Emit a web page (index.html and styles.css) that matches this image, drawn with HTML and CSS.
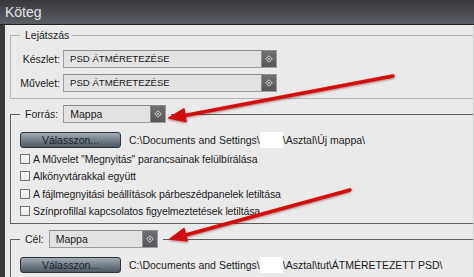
FILE: index.html
```html
<!DOCTYPE html>
<html lang="hu">

<head>
    <meta charset="UTF-8">
    <meta name="viewport" content="width=device-width, initial-scale=1.0">
    <title>Köteg</title>

    <link rel="stylesheet" href="styles.css">
</head>

<body>
    <div id="window">
        <div class="titlebar">Köteg</div>

        <div class="panel">
            <fieldset class="group group-light">
                <legend class="legend-text">Lejátszás</legend>
                <div class="field_row">
                    <span class="field_label">Készlet:</span>
                    <div class="select select-wide">
                        <span class="select_value">PSD ÁTMÉRETEZÉSE</span>
                        <span class="select_btn"><svg width="8" height="8" viewBox="0 0 8 8"><polygon points="4,0.7 7.3,4 4,7.3 0.7,4" fill="none" stroke="#d6d6d6" stroke-width="1"/><circle cx="4" cy="4" r="1" fill="#d6d6d6"/></svg></span>
                    </div>
                </div>
                <div class="field_row">
                    <span class="field_label">Művelet:</span>
                    <div class="select select-wide">
                        <span class="select_value">PSD ÁTMÉRETEZÉSE</span>
                        <span class="select_btn"><svg width="8" height="8" viewBox="0 0 8 8"><polygon points="4,0.7 7.3,4 4,7.3 0.7,4" fill="none" stroke="#d6d6d6" stroke-width="1"/><circle cx="4" cy="4" r="1" fill="#d6d6d6"/></svg></span>
                    </div>
                </div>
            </fieldset>

            <fieldset class="group">
                <legend class="legend-field">
                    <span>Forrás:</span>
                    <div class="select select-source">
                        <span class="select_value">Mappa</span>
                        <span class="select_btn"><svg width="8" height="8" viewBox="0 0 8 8"><polygon points="4,0.7 7.3,4 4,7.3 0.7,4" fill="none" stroke="#d6d6d6" stroke-width="1"/><circle cx="4" cy="4" r="1" fill="#d6d6d6"/></svg></span>
                    </div>
                </legend>
                <div class="path_row">
                    <button class="choose_btn">Válasszon...</button>
                    <span class="path">C:\Documents and Settings\<span class="blank"></span>\Asztal\Új mappa\</span>
                </div>
                <label class="check"><span class="check_box"></span>A Művelet "Megnyitás" parancsainak felülbírálása</label>
                <label class="check"><span class="check_box"></span>Alkönyvtárakkal együtt</label>
                <label class="check"><span class="check_box"></span>A fájlmegnyitási beállítások párbeszédpanelek letiltása</label>
                <label class="check"><span class="check_box"></span>Színprofillal kapcsolatos figyelmeztetések letiltása</label>
            </fieldset>

            <fieldset class="group">
                <legend class="legend-field">
                    <span>Cél:</span>
                    <div class="select select-target">
                        <span class="select_value">Mappa</span>
                        <span class="select_btn"><svg width="8" height="8" viewBox="0 0 8 8"><polygon points="4,0.7 7.3,4 4,7.3 0.7,4" fill="none" stroke="#d6d6d6" stroke-width="1"/><circle cx="4" cy="4" r="1" fill="#d6d6d6"/></svg></span>
                    </div>
                </legend>
                <div class="path_row">
                    <button class="choose_btn">Válasszon...</button>
                    <span class="path">C:\Documents and Settings\<span class="blank"></span>\Asztal\tut\ÁTMÉRETEZETT PSD\</span>
                </div>
            </fieldset>
        </div>

        <!-- red arrows drawn over the dialog -->
        <svg class="arrows" width="474" height="277" viewBox="0 0 474 277">
            <defs>
                <filter id="soft" x="-10%" y="-50%" width="120%" height="200%">
                    <feGaussianBlur stdDeviation="0.6" />
                    <feDropShadow dx="0" dy="1" stdDeviation="1" flood-color="#700" flood-opacity="0.5" />
                </filter>
            </defs>
            <g filter="url(#soft)" fill="#d20d0d" stroke="#d20d0d" stroke-linecap="round">
                <line x1="393" y1="76" x2="182" y2="116" stroke-width="3.4" />
                <polygon points="169,118 186,121.5 184,109" stroke-width="1.5" stroke-linejoin="round" />
                <line x1="350" y1="190" x2="182" y2="236" stroke-width="3.4" />
                <polygon points="170,239 187.2,240.8 184,228.6" stroke-width="1.5" stroke-linejoin="round" />
            </g>
        </svg>
    </div>
</body>

</html>
```

FILE: styles.css
```css
body {
    margin: 0;
    font-family: "Liberation Sans", Arial, sans-serif;
    font-size: 10.5px;
    color: #1b1b1b;
    overflow: hidden;
}

#window {
    position: relative;
    width: 474px;
    height: 277px;
    overflow: hidden;
    background-color: #3a3a3c;
}

.titlebar {
    height: 24px;
    line-height: 24px;
    padding-left: 5px;
    border-bottom: 1px solid #1c1c1e;

    font-size: 14px;
    color: #e4e4e6;
    background: linear-gradient(#36373b, #5c5e65);
}

.panel {
    margin-left: 5px;
    height: 252px;
    padding: 0 0 0 5px;
    border-right: 1px solid #cfcfcf;
    border-top: 1px solid #f6f6f6;

    background-color: #eaeaea;
}

.group {
    margin: 6px 0 0 0;
    padding: 9px 0 3px 9px;
    border: 1px solid #5e5e5e;
    border-right: none;
    min-width: 0;
}

.group-light {
    margin-top: 2px;
    padding-top: 8px;
    padding-bottom: 6px;
    border-color: #b4b4b4;
}

.legend-text {
    padding: 0 3px 0 5px;
    line-height: 14px;
}

.legend-field {
    display: flex;
    align-items: center;
    gap: 5px;
    padding: 0 5px;
}

.field_row {
    display: flex;
    align-items: center;
    gap: 3px;
    margin-bottom: 6px;
}

.field_row:last-child {
    margin-bottom: 0;
}

.field_label {
    width: 40px;
    text-align: right;
}

/* dropdowns */
.select {
    display: flex;
    height: 18px;
    box-sizing: border-box;
    border: 1px solid #9c9c9c;
    border-top-color: #8a8a8a;
    background-color: #e2e2e2;
}

.select-wide {
    width: 214px;
}

.select-source {
    width: 103px;
}

.select-target {
    width: 109px;
}

.select_value {
    flex: 1;
    padding-left: 6px;
    line-height: 16px;
}

.select-wide .select_value {
    font-size: 9.6px;
}

.select_btn {
    width: 14px;
    display: flex;
    align-items: center;
    justify-content: center;
    border-left: 1px solid #8c8c8c;
    background: linear-gradient(#6e7074, #55575b);
}

/* path rows */
.path_row {
    display: flex;
    align-items: center;
    gap: 8px;
    margin-bottom: 2px;
}

.choose_btn {
    width: 101px;
    height: 16px;
    padding: 0;
    border: 1px solid #2c333a;
    border-radius: 3px;

    font-family: inherit;
    font-size: 10.5px;
    color: #18212a;
    background: linear-gradient(#a2abb4, #76808a 50%, #4f5963);
}

.path {
    display: flex;
    align-items: center;
    white-space: pre;
}

.blank {
    display: inline-block;
    width: 23px;
    height: 16px;
    background-color: #ffffff;
}

/* checkboxes */
.check {
    display: flex;
    align-items: center;
    gap: 3px;
    height: 17.5px;
    letter-spacing: -0.1px;
}

.check_box {
    width: 10px;
    height: 10px;
    box-sizing: border-box;
    border: 1px solid #747474;
    background: linear-gradient(#f8f8f8, #e6e6e6);
}

.arrows {
    position: absolute;
    left: 0;
    top: 0;
    pointer-events: none;
}
```
